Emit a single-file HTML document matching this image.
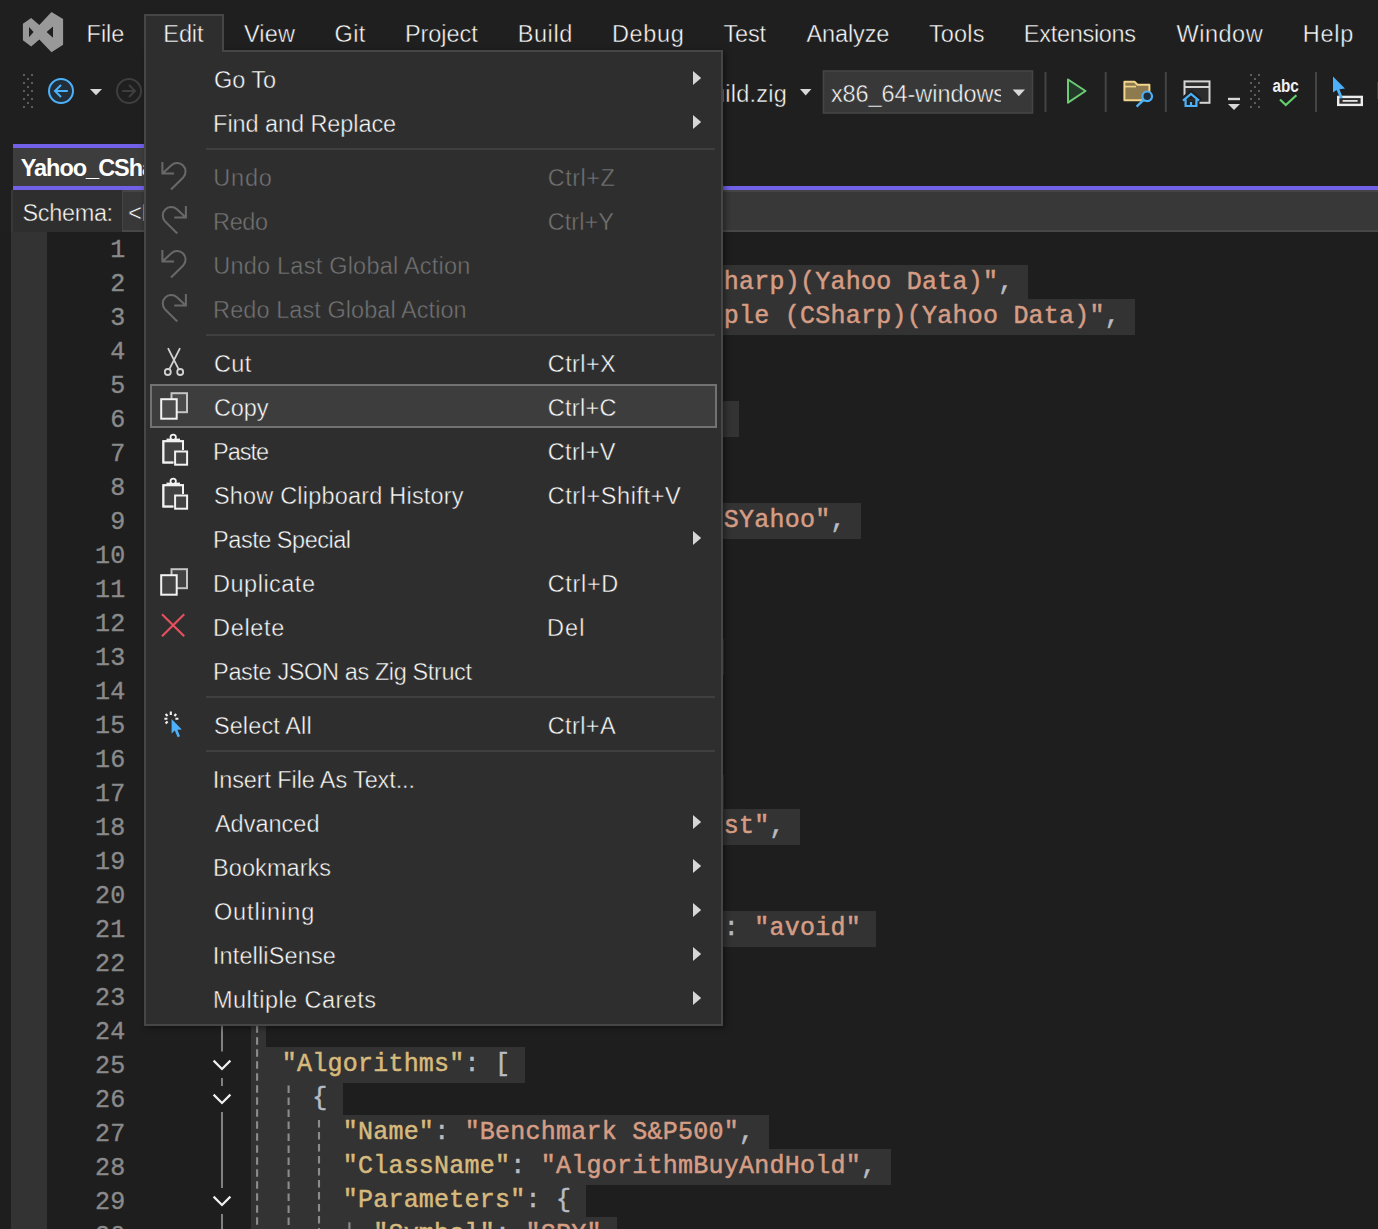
<!DOCTYPE html>
<html><head><meta charset="utf-8"><title>Yahoo_CSharp.json - Microsoft Visual Studio</title>
<style>
html,body{margin:0;padding:0;background:#1f1f1f;overflow:hidden;}
#app{position:relative;width:1378px;height:1229px;overflow:hidden;background:#1f1f1f;font-family:"Liberation Sans",sans-serif;}
.t{position:absolute;white-space:pre;line-height:30px;height:30px;font-family:"Liberation Sans",sans-serif;}
.abs{position:absolute;}
svg{position:absolute;left:0;top:0;overflow:visible;}
#editor{position:absolute;left:0;top:232px;width:1378px;height:997px;background:#1e1e1e;overflow:hidden;}
.cl{position:absolute;left:251.2px;white-space:pre;font-family:"Liberation Mono",monospace;font-size:25px;letter-spacing:0.2406px;line-height:34px;height:34px;margin-top:-232px;-webkit-text-stroke:0.5px currentColor;}
.sel{position:absolute;left:251px;height:35.5px;background:#333333;margin-top:-232px;}
.ln{position:absolute;left:47px;width:78.4px;text-align:right;white-space:pre;font-family:"Liberation Mono",monospace;font-size:25px;letter-spacing:0.2406px;line-height:34px;height:34px;color:#8a8a8a;margin-top:-232px;-webkit-text-stroke:0.35px currentColor;}
.k{color:#d7ba7d;} .s{color:#d69d85;} .p{color:#b8bcc4;}
#menu{position:absolute;left:144px;top:50px;width:575px;height:972px;background:#2e2e2e;border:2px solid #464646;box-shadow:2px 2px 6px rgba(0,0,0,0.42);z-index:20;}
#edithdr{position:absolute;left:144px;top:14px;width:76px;height:36px;background:#2e2e2e;border:2px solid #464646;border-bottom:none;z-index:21;}
.sep{position:absolute;left:60px;width:509px;height:2px;background:#3f3f3f;}
</style></head><body>
<div id="app">

<!-- title/menu bar + toolbar icons -->
<svg width="1378" height="130" viewBox="0 0 1378 130">
 <path fill="#999999" fill-rule="evenodd" d="M22.9 23.8 L31.2 18 L39.3 25 L51.5 11.9 L63.1 18.9 L63.1 44.7 L51.5 52.2 L39.3 39.5 L31.2 46.4 L22.9 40.3 Z M29 27 L29 37.2 L33.6 31.9 Z M53 26.4 L53 37.7 L46.6 31.9 Z"/>
 <g fill="#5c5c5c"><rect x="23" y="74" width="2" height="2"/><rect x="31" y="74" width="2" height="2"/><rect x="27" y="78" width="2" height="2"/><rect x="23" y="82" width="2" height="2"/><rect x="31" y="82" width="2" height="2"/><rect x="27" y="86" width="2" height="2"/><rect x="23" y="90" width="2" height="2"/><rect x="31" y="90" width="2" height="2"/><rect x="27" y="94" width="2" height="2"/><rect x="23" y="98" width="2" height="2"/><rect x="31" y="98" width="2" height="2"/><rect x="27" y="102" width="2" height="2"/><rect x="23" y="106" width="2" height="2"/><rect x="31" y="106" width="2" height="2"/></g>
 <circle cx="61" cy="91" r="12" fill="#222e38" stroke="#4db1fa" stroke-width="2"/>
 <path d="M67.8 91 H55 M61 85 L55 91 L61 97" fill="none" stroke="#4db1fa" stroke-width="2"/>
 <path d="M90 89 H102 L96 95.2 Z" fill="#d8d8d8"/>
 <circle cx="129" cy="91" r="12" fill="none" stroke="#3e3e3e" stroke-width="2"/>
 <path d="M122.2 91 H135 M129 85 L135 91 L129 97" fill="none" stroke="#3e3e3e" stroke-width="2"/>
 <!-- build.zig dropdown arrow -->
 <path d="M800 89 H811.4 L805.7 95.4 Z" fill="#d8d8d8"/>
 <!-- platform combo -->
 <rect x="823.5" y="71" width="209" height="42" fill="#383838" stroke="#454545" stroke-width="1.6"/>
 <path d="M1012.6 89.6 H1025 L1018.8 96.2 Z" fill="#d8d8d8"/>
 <!-- separators -->
 <g fill="#444444"><rect x="1044.5" y="72" width="2" height="40"/><rect x="1104.7" y="72" width="2" height="40"/><rect x="1164.8" y="72" width="2" height="40"/><rect x="1315" y="72" width="2" height="40"/></g>
 <!-- start (play) -->
 <path d="M1068 79.5 L1085.5 91 L1068 102.6 Z" fill="#24382a" stroke="#6ccb74" stroke-width="2" stroke-linejoin="round"/>
 <!-- folder + magnifier -->
 <path d="M1124.4 81.8 H1134.5 L1137.5 84.8 H1149.4 V100.2 H1124.4 Z" fill="#8d7a4f" stroke="#f2d48a" stroke-width="2" stroke-linejoin="round"/>
 <path d="M1124.4 86.6 H1136" fill="none" stroke="#f2d48a" stroke-width="1.6"/>
 <circle cx="1147.2" cy="96.3" r="4.8" fill="#1f2c38" stroke="#4db1fa" stroke-width="2.2"/>
 <path d="M1143.6 99.8 L1136.6 106.6" stroke="#4db1fa" stroke-width="2.4" fill="none"/>
 <!-- window + home -->
 <rect x="1184.5" y="81.4" width="25" height="21.4" fill="#2c2c2c" stroke="#d4d4d4" stroke-width="2"/>
 <rect x="1184.5" y="86" width="25" height="2" fill="#d4d4d4"/>
 <path d="M1181.5 100.5 L1191 93 L1200.5 100.5 M1185 99 V106.5 H1197 V99" fill="#1f1f1f" stroke="#1f1f1f" stroke-width="5"/>
 <path d="M1183 100.6 L1191 94 L1199 100.6 M1185.6 99.5 V106 H1196.4 V99.5 M1191 106 V102" fill="none" stroke="#4db1fa" stroke-width="2.2"/>
 <!-- overflow -->
 <rect x="1228" y="97.8" width="12" height="2.4" fill="#d8d8d8"/>
 <path d="M1228 104 H1240 L1234 110 Z" fill="#d8d8d8"/>
 <g fill="#5c5c5c"><rect x="1250" y="74" width="2" height="2"/><rect x="1258" y="74" width="2" height="2"/><rect x="1254" y="78" width="2" height="2"/><rect x="1250" y="82" width="2" height="2"/><rect x="1258" y="82" width="2" height="2"/><rect x="1254" y="86" width="2" height="2"/><rect x="1250" y="90" width="2" height="2"/><rect x="1258" y="90" width="2" height="2"/><rect x="1254" y="94" width="2" height="2"/><rect x="1250" y="98" width="2" height="2"/><rect x="1258" y="98" width="2" height="2"/><rect x="1254" y="102" width="2" height="2"/><rect x="1250" y="106" width="2" height="2"/><rect x="1258" y="106" width="2" height="2"/></g>
 <!-- abc check -->
 <text x="1272.4" y="92" font-family="Liberation Sans, sans-serif" font-weight="700" font-size="17.5" fill="#f0f0f0" textLength="26.4" lengthAdjust="spacingAndGlyphs">abc</text>
 <path d="M1280 99.5 L1285.8 105 L1296.4 95.2" fill="none" stroke="#62d06c" stroke-width="2.2"/>
 <!-- cursor + box -->
 <rect x="1338.2" y="96.9" width="23.6" height="8" fill="#2d2d2d" stroke="#ececec" stroke-width="2.4"/>
 <rect x="1342.6" y="100" width="15" height="1.8" fill="#e4e4e4"/>
 <path d="M1333 76.5 L1333 92.6 L1336.6 90 L1340.2 98.6 L1342.8 97.4 L1339.4 89.2 L1345 88.4 Z" fill="#4db1fa"/>
 <rect x="1377" y="82" width="1" height="17" fill="#3a3a3a"/>
</svg>

<!-- document tab -->
<div class="abs" style="left:13px;top:144px;width:300px;height:46px;background:#3d3d3d;"></div>
<div class="abs" style="left:13px;top:144px;width:300px;height:4px;background:#7160e8;"></div>
<div class="abs" style="left:13px;top:186px;width:1365px;height:4px;background:#7160e8;"></div>

<!-- schema bar -->
<div class="abs" style="left:11px;top:190px;width:1367px;height:42px;background:#2e2e2e;border-left:2px solid #383838;box-sizing:border-box;"></div>
<div class="abs" style="left:122px;top:190px;width:1256px;height:38px;background:#383838;border-top:2px solid #454545;border-bottom:2px solid #484848;border-left:1.5px solid #454545;"></div>

<!-- editor -->
<div id="editor">
 <div class="abs" style="left:11px;top:0;width:36px;height:997px;background:#333333;"></div>
 <div class="sel" style="top:265px;width:777.4px"></div><div class="sel" style="top:299px;width:884.1px"></div><div class="sel" style="top:333px;width:304.9px"></div><div class="sel" style="top:367px;width:91.5px"></div><div class="sel" style="top:401px;width:487.8px"></div><div class="sel" style="top:435px;width:350.6px"></div><div class="sel" style="top:469px;width:320.1px"></div><div class="sel" style="top:503px;width:609.7px"></div><div class="sel" style="top:537px;width:335.3px"></div><div class="sel" style="top:571px;width:381.1px"></div><div class="sel" style="top:605px;width:121.9px"></div><div class="sel" style="top:639px;width:472.5px"></div><div class="sel" style="top:673px;width:91.5px"></div><div class="sel" style="top:707px;width:76.2px"></div><div class="sel" style="top:741px;width:243.9px"></div><div class="sel" style="top:775px;width:472.5px"></div><div class="sel" style="top:809px;width:548.7px"></div><div class="sel" style="top:843px;width:350.6px"></div><div class="sel" style="top:877px;width:350.6px"></div><div class="sel" style="top:911px;width:625.0px"></div><div class="sel" style="top:945px;width:76.2px"></div><div class="sel" style="top:979px;width:304.9px"></div><div class="sel" style="top:1013px;width:15.2px"></div><div class="sel" style="top:1047px;width:274.4px"></div><div class="sel" style="top:1081px;width:91.5px"></div><div class="sel" style="top:1115px;width:518.3px"></div><div class="sel" style="top:1149px;width:640.2px"></div><div class="sel" style="top:1183px;width:335.3px"></div><div class="sel" style="top:1217px;width:365.8px"></div>
 <div class="ln" style="top:234px">1</div><div class="ln" style="top:268px">2</div><div class="ln" style="top:302px">3</div><div class="ln" style="top:336px">4</div><div class="ln" style="top:370px">5</div><div class="ln" style="top:404px">6</div><div class="ln" style="top:438px">7</div><div class="ln" style="top:472px">8</div><div class="ln" style="top:506px">9</div><div class="ln" style="top:540px">10</div><div class="ln" style="top:574px">11</div><div class="ln" style="top:608px">12</div><div class="ln" style="top:642px">13</div><div class="ln" style="top:676px">14</div><div class="ln" style="top:710px">15</div><div class="ln" style="top:744px">16</div><div class="ln" style="top:778px">17</div><div class="ln" style="top:812px">18</div><div class="ln" style="top:846px">19</div><div class="ln" style="top:880px">20</div><div class="ln" style="top:914px">21</div><div class="ln" style="top:948px">22</div><div class="ln" style="top:982px">23</div><div class="ln" style="top:1016px">24</div><div class="ln" style="top:1050px">25</div><div class="ln" style="top:1084px">26</div><div class="ln" style="top:1118px">27</div><div class="ln" style="top:1152px">28</div><div class="ln" style="top:1186px">29</div><div class="ln" style="top:1220px">30</div>
 <svg width="1378" height="997" viewBox="0 232 1378 997">
  <g stroke="#8c8c8c" stroke-width="2.1" stroke-dasharray="7.6 4.4" fill="none">
   <path d="M257.1 269.2 V1229"/>
   <path d="M288.6 1085.4 V1229"/>
   <path d="M319 1120 V1229"/>
   <path d="M349.4 1222.3 V1229"/>
  </g>
  <g stroke="#8c8c8c" stroke-width="1.8" fill="none">
   <path d="M222 1020 V1051.5 M222 1112 V1188 M222 1214 V1229"/>
   <path d="M222 1078 V1086" />
  </g>
  <g stroke="#f0f0f0" stroke-width="2.2" fill="none">
   <path d="M213.6 1060.6 L222 1069 L230.4 1060.6"/>
   <path d="M213.6 1094.6 L222 1103 L230.4 1094.6"/>
   <path d="M213.6 1196.6 L222 1205 L230.4 1196.6"/>
  </g>
 </svg>
 <div class="cl" style="top:232px"><span class="p">{</span></div><div class="cl" style="top:266px"><span class="p">  </span><span class="k">&quot;Name&quot;</span><span class="p">:</span><span class="p"> </span><span class="s">&quot;Portfolio Sample (CSharp)(Yahoo Data)&quot;</span><span class="p">,</span></div><div class="cl" style="top:300px"><span class="p">  </span><span class="k">&quot;Description&quot;</span><span class="p">:</span><span class="p"> </span><span class="s">&quot;A simple Example (CSharp)(Yahoo Data)&quot;</span><span class="p">,</span></div><div class="cl" style="top:334px"><span class="p">  </span><span class="k">&quot;DataSources&quot;</span><span class="p">:</span><span class="p"> </span><span class="p"> </span><span class="p">[</span></div><div class="cl" style="top:368px"><span class="p">    {</span></div><div class="cl" style="top:402px"><span class="p">      </span><span class="k">&quot;Name&quot;</span><span class="p">:</span><span class="p"> </span><span class="s">&quot;Yahoo! Finance&quot;</span><span class="p">,</span></div><div class="cl" style="top:436px"><span class="p">      </span><span class="k">&quot;Enabled&quot;</span><span class="p">:</span><span class="p"> </span><span class="p">true</span><span class="p">,</span></div><div class="cl" style="top:470px"><span class="p">      </span><span class="k">&quot;Priority&quot;</span><span class="p">:</span><span class="p"> </span><span class="p">1</span><span class="p">,</span></div><div class="cl" style="top:504px"><span class="p">      </span><span class="k">&quot;ClassName&quot;</span><span class="p">:</span><span class="p"> </span><span class="s">&quot;DataSourceCSYahoo&quot;</span><span class="p">,</span></div><div class="cl" style="top:538px"><span class="p">      </span><span class="k">&quot;Parameters&quot;</span><span class="p">:</span><span class="p"> </span><span class="p">{</span></div><div class="cl" style="top:572px"><span class="p">        </span><span class="k">&quot;Interval&quot;</span><span class="p">:</span><span class="p"> </span><span class="s">&quot;1d&quot;</span></div><div class="cl" style="top:606px"><span class="p">      }</span></div><div class="cl" style="top:640px"><span class="p">      </span><span class="k">&quot;CacheFolder&quot;</span><span class="p">:</span><span class="p"> </span><span class="s">&quot;cache/&quot;</span><span class="p">,</span></div><div class="cl" style="top:674px"><span class="p">    }</span></div><div class="cl" style="top:708px"><span class="p">  ],</span></div><div class="cl" style="top:742px"><span class="p">  </span><span class="k">&quot;Settings&quot;</span><span class="p">:</span><span class="p"> </span><span class="p">{</span></div><div class="cl" style="top:776px"><span class="p">    </span><span class="k">&quot;StartDate&quot;</span><span class="p">:</span><span class="p"> </span><span class="s">&quot;2010-01-01&quot;</span><span class="p">,</span></div><div class="cl" style="top:810px"><span class="p">    </span><span class="k">&quot;BrokerSimulation&quot;</span><span class="p">:</span><span class="p"> </span><span class="s">&quot;Backtest&quot;</span><span class="p">,</span></div><div class="cl" style="top:844px"><span class="p">    </span><span class="k">&quot;Capital&quot;</span><span class="p">:</span><span class="p"> </span><span class="p">100000</span><span class="p">,</span></div><div class="cl" style="top:878px"><span class="p">    </span><span class="k">&quot;Currency&quot;</span><span class="p">:</span><span class="p"> </span><span class="s">&quot;USD&quot;</span><span class="p">,</span></div><div class="cl" style="top:912px"><span class="p">    </span><span class="k">&quot;MissingDataHandlingPolicy&quot;</span><span class="p">:</span><span class="p"> </span><span class="s">&quot;avoid&quot;</span></div><div class="cl" style="top:946px"><span class="p">  },</span></div><div class="cl" style="top:980px"><span class="p">  </span><span class="k">&quot;Verbose&quot;</span><span class="p">:</span><span class="p"> </span><span class="p">false</span><span class="p">,</span></div><div class="cl" style="top:1014px"></div><div class="cl" style="top:1048px"><span class="p">  </span><span class="k">&quot;Algorithms&quot;</span><span class="p">:</span><span class="p"> </span><span class="p">[</span></div><div class="cl" style="top:1082px"><span class="p">    </span><span class="p">{</span></div><div class="cl" style="top:1116px"><span class="p">      </span><span class="k">&quot;Name&quot;</span><span class="p">:</span><span class="p"> </span><span class="s">&quot;Benchmark S&amp;P500&quot;</span><span class="p">,</span></div><div class="cl" style="top:1150px"><span class="p">      </span><span class="k">&quot;ClassName&quot;</span><span class="p">:</span><span class="p"> </span><span class="s">&quot;AlgorithmBuyAndHold&quot;</span><span class="p">,</span></div><div class="cl" style="top:1184px"><span class="p">      </span><span class="k">&quot;Parameters&quot;</span><span class="p">:</span><span class="p"> </span><span class="p">{</span></div><div class="cl" style="top:1218px"><span class="p">        </span><span class="k">&quot;Symbol&quot;</span><span class="p">:</span><span class="p"> </span><span class="s">&quot;SPY&quot;</span></div>
</div>

<!-- Edit menu popup -->
<div id="menu">
 <div class="sep" style="top:96px"></div>
 <div class="sep" style="top:282px"></div>
 <div class="sep" style="top:644px"></div>
 <div class="sep" style="top:698px"></div>
 <div class="abs" style="left:4px;top:332px;width:563px;height:40px;background:#3d3d3d;border:2px solid #727272;"></div>
</div>
<div id="edithdr"></div>
<svg width="1378" height="1229" viewBox="0 0 1378 1229" style="z-index:25">
 <g fill="#d6d6d6"><path d="M693 71 L701.2 78 L693 85 Z"/><path d="M693 115 L701.2 122 L693 129 Z"/><path d="M693 531 L701.2 538 L693 545 Z"/><path d="M693 815 L701.2 822 L693 829 Z"/><path d="M693 859 L701.2 866 L693 873 Z"/><path d="M693 903 L701.2 910 L693 917 Z"/><path d="M693 947 L701.2 954 L693 961 Z"/><path d="M693 991 L701.2 998 L693 1005 Z"/></g>
 <g fill="none" stroke="#696969" stroke-width="2">
  <path d="M162.4 162 V173.5 H174 M163 173 L171.4 165.2 A8.5 8.5 0 0 1 183.4 177.2 L171 189.5"/><path d="M185.9 206 V217.5 H174.3 M185.3 217 L176.9 209.2 A8.5 8.5 0 0 0 164.9 221.2 L177.3 233.5"/><path d="M162.4 250 V261.5 H174 M163 261 L171.4 253.2 A8.5 8.5 0 0 1 183.4 265.2 L171 277.5"/><path d="M185.9 294 V305.5 H174.3 M185.3 305 L176.9 297.2 A8.5 8.5 0 0 0 164.9 309.2 L177.3 321.5"/>
 </g>
 <!-- cut -->
 <g fill="none" stroke="#d2d2d2" stroke-width="1.8">
  <path d="M168 348.2 L178.6 369.2 M180 348.2 L169.4 369.2"/>
  <circle cx="167.8" cy="372" r="3"/><circle cx="180.2" cy="372" r="3"/>
 </g>
 <rect x="171.5" y="393.2" width="15.5" height="19" fill="#4b4b4b" stroke="#c4c4c4" stroke-width="2"/><rect x="161.2" y="399.2" width="15.5" height="19.5" fill="#4b4b4b" stroke="#f2f2f2" stroke-width="2"/>
 <path d="M173.4 462.4 H163.4 V441.2 H183 V450" fill="#424242" stroke="#f2f2f2" stroke-width="2"/><rect x="164.4" y="442.2" width="17.6" height="19.2" fill="#424242"/><path d="M173.4 462.4 H163.4 V441.2 H183 V450" fill="none" stroke="#f2f2f2" stroke-width="2"/><rect x="166.5" y="438.6" width="13.5" height="3" fill="#f2f2f2"/><circle cx="173.2" cy="437.3" r="2.7" fill="#2e2e2e" stroke="#f2f2f2" stroke-width="1.8"/><rect x="175.1" y="451.5" width="12" height="13.2" fill="#424242" stroke="#f2f2f2" stroke-width="2"/>
 <path d="M173.4 506.4 H163.4 V485.2 H183 V494" fill="#424242" stroke="#f2f2f2" stroke-width="2"/><rect x="164.4" y="486.2" width="17.6" height="19.2" fill="#424242"/><path d="M173.4 506.4 H163.4 V485.2 H183 V494" fill="none" stroke="#f2f2f2" stroke-width="2"/><rect x="166.5" y="482.6" width="13.5" height="3" fill="#f2f2f2"/><circle cx="173.2" cy="481.3" r="2.7" fill="#2e2e2e" stroke="#f2f2f2" stroke-width="1.8"/><rect x="175.1" y="495.5" width="12" height="13.2" fill="#424242" stroke="#f2f2f2" stroke-width="2"/>
 <rect x="171.5" y="569.2" width="15.5" height="19" fill="#424242" stroke="#c4c4c4" stroke-width="2"/><rect x="161.2" y="575.2" width="15.5" height="19.5" fill="#424242" stroke="#f2f2f2" stroke-width="2"/>
 <path d="M162 614.2 L184.2 636.2 M184.2 614.2 L162 636.2" stroke="#e5505f" stroke-width="2.2" fill="none"/>
 <!-- select all -->
 <g stroke="#f4f4f4" stroke-width="2.1" fill="none">
  <path d="M170.8 711.6 V715 M164.4 718.7 H167.4 M175.4 718.7 H178.4 M165.6 714 L167.6 716 M176.2 714 L174.4 716 M165.6 723.6 L167.6 721.6"/>
 </g>
 <path d="M171.6 719 L171.6 733.4 L174.8 730.6 L177.6 737.2 L180 736.2 L177.4 729.8 L181.8 729.6 Z" fill="#4db1fa"/>
</svg>

<span class="t" style="left:86.60px;top:19.26px;font-size:23.5px;letter-spacing:-0.045px;color:#fafafa;-webkit-text-stroke:0.45px #1f1f1f;">File</span>
<span class="t" style="left:163.35px;top:19.26px;font-size:23.5px;letter-spacing:-0.112px;color:#fafafa;-webkit-text-stroke:0.45px #2e2e2e;z-index:30;">Edit</span>
<span class="t" style="left:243.89px;top:19.26px;font-size:23.5px;letter-spacing:0.181px;color:#fafafa;-webkit-text-stroke:0.45px #1f1f1f;">View</span>
<span class="t" style="left:334.61px;top:19.26px;font-size:23.5px;letter-spacing:0.317px;color:#fafafa;-webkit-text-stroke:0.45px #1f1f1f;">Git</span>
<span class="t" style="left:404.92px;top:19.26px;font-size:23.5px;letter-spacing:-0.046px;color:#fafafa;-webkit-text-stroke:0.45px #1f1f1f;">Project</span>
<span class="t" style="left:517.74px;top:19.26px;font-size:23.5px;letter-spacing:0.563px;color:#fafafa;-webkit-text-stroke:0.45px #1f1f1f;">Build</span>
<span class="t" style="left:611.92px;top:19.26px;font-size:23.5px;letter-spacing:0.642px;color:#fafafa;-webkit-text-stroke:0.45px #1f1f1f;">Debug</span>
<span class="t" style="left:723.59px;top:19.26px;font-size:23.5px;letter-spacing:-0.215px;color:#fafafa;-webkit-text-stroke:0.45px #1f1f1f;">Test</span>
<span class="t" style="left:806.47px;top:19.26px;font-size:23.5px;letter-spacing:-0.123px;color:#fafafa;-webkit-text-stroke:0.45px #1f1f1f;">Analyze</span>
<span class="t" style="left:928.92px;top:19.26px;font-size:23.5px;letter-spacing:0.176px;color:#fafafa;-webkit-text-stroke:0.45px #1f1f1f;">Tools</span>
<span class="t" style="left:1023.84px;top:19.26px;font-size:23.5px;letter-spacing:-0.299px;color:#fafafa;-webkit-text-stroke:0.45px #1f1f1f;">Extensions</span>
<span class="t" style="left:1176.57px;top:19.26px;font-size:23.5px;letter-spacing:0.505px;color:#fafafa;-webkit-text-stroke:0.45px #1f1f1f;">Window</span>
<span class="t" style="left:1302.74px;top:19.26px;font-size:23.5px;letter-spacing:0.729px;color:#fafafa;-webkit-text-stroke:0.45px #1f1f1f;">Help</span>
<span class="t" style="left:213.93px;top:64.56px;font-size:23.5px;letter-spacing:-0.045px;color:#fafafa;-webkit-text-stroke:0.45px #2e2e2e;z-index:30;">Go To</span>
<span class="t" style="left:213.11px;top:108.56px;font-size:23.5px;letter-spacing:-0.077px;color:#fafafa;-webkit-text-stroke:0.45px #2e2e2e;z-index:30;">Find and Replace</span>
<span class="t" style="left:213.26px;top:162.56px;font-size:23.5px;letter-spacing:0.827px;color:#737373;-webkit-text-stroke:0.45px #2e2e2e;z-index:30;">Undo</span>
<span class="t" style="left:547.74px;top:162.56px;font-size:23.5px;letter-spacing:0.485px;color:#737373;-webkit-text-stroke:0.45px #2e2e2e;z-index:30;">Ctrl+Z</span>
<span class="t" style="left:213.11px;top:206.56px;font-size:23.5px;letter-spacing:-0.390px;color:#737373;-webkit-text-stroke:0.45px #2e2e2e;z-index:30;">Redo</span>
<span class="t" style="left:547.74px;top:206.56px;font-size:23.5px;letter-spacing:0.055px;color:#737373;-webkit-text-stroke:0.45px #2e2e2e;z-index:30;">Ctrl+Y</span>
<span class="t" style="left:213.26px;top:250.56px;font-size:23.5px;letter-spacing:0.224px;color:#737373;-webkit-text-stroke:0.45px #2e2e2e;z-index:30;">Undo Last Global Action</span>
<span class="t" style="left:213.11px;top:294.56px;font-size:23.5px;letter-spacing:0.066px;color:#737373;-webkit-text-stroke:0.45px #2e2e2e;z-index:30;">Redo Last Global Action</span>
<span class="t" style="left:213.93px;top:348.56px;font-size:23.5px;letter-spacing:0.388px;color:#fafafa;-webkit-text-stroke:0.45px #2e2e2e;z-index:30;">Cut</span>
<span class="t" style="left:547.74px;top:348.56px;font-size:23.5px;letter-spacing:0.422px;color:#fafafa;-webkit-text-stroke:0.45px #2e2e2e;z-index:30;">Ctrl+X</span>
<span class="t" style="left:213.93px;top:392.56px;font-size:23.5px;letter-spacing:-0.126px;color:#fafafa;-webkit-text-stroke:0.45px #3d3d3d;z-index:30;">Copy</span>
<span class="t" style="left:547.74px;top:392.56px;font-size:23.5px;letter-spacing:0.286px;color:#fafafa;-webkit-text-stroke:0.45px #3d3d3d;z-index:30;">Ctrl+C</span>
<span class="t" style="left:213.11px;top:436.56px;font-size:23.5px;letter-spacing:-1.062px;color:#fafafa;-webkit-text-stroke:0.45px #2e2e2e;z-index:30;">Paste</span>
<span class="t" style="left:547.74px;top:436.56px;font-size:23.5px;letter-spacing:0.341px;color:#fafafa;-webkit-text-stroke:0.45px #2e2e2e;z-index:30;">Ctrl+V</span>
<span class="t" style="left:213.88px;top:480.56px;font-size:23.5px;letter-spacing:0.199px;color:#fafafa;-webkit-text-stroke:0.45px #2e2e2e;z-index:30;">Show Clipboard History</span>
<span class="t" style="left:547.74px;top:480.56px;font-size:23.5px;letter-spacing:0.566px;color:#fafafa;-webkit-text-stroke:0.45px #2e2e2e;z-index:30;">Ctrl+Shift+V</span>
<span class="t" style="left:213.11px;top:524.56px;font-size:23.5px;letter-spacing:-0.476px;color:#fafafa;-webkit-text-stroke:0.45px #2e2e2e;z-index:30;">Paste Special</span>
<span class="t" style="left:213.11px;top:568.56px;font-size:23.5px;letter-spacing:0.484px;color:#fafafa;-webkit-text-stroke:0.45px #2e2e2e;z-index:30;">Duplicate</span>
<span class="t" style="left:547.74px;top:568.56px;font-size:23.5px;letter-spacing:0.669px;color:#fafafa;-webkit-text-stroke:0.45px #2e2e2e;z-index:30;">Ctrl+D</span>
<span class="t" style="left:213.11px;top:612.56px;font-size:23.5px;letter-spacing:0.659px;color:#fafafa;-webkit-text-stroke:0.45px #2e2e2e;z-index:30;">Delete</span>
<span class="t" style="left:546.97px;top:612.56px;font-size:23.5px;letter-spacing:1.065px;color:#fafafa;-webkit-text-stroke:0.45px #2e2e2e;z-index:30;">Del</span>
<span class="t" style="left:213.11px;top:656.56px;font-size:23.5px;letter-spacing:-0.385px;color:#fafafa;-webkit-text-stroke:0.45px #2e2e2e;z-index:30;">Paste JSON as Zig Struct</span>
<span class="t" style="left:213.88px;top:710.56px;font-size:23.5px;letter-spacing:0.125px;color:#fafafa;-webkit-text-stroke:0.45px #2e2e2e;z-index:30;">Select All</span>
<span class="t" style="left:547.74px;top:710.56px;font-size:23.5px;letter-spacing:0.392px;color:#fafafa;-webkit-text-stroke:0.45px #2e2e2e;z-index:30;">Ctrl+A</span>
<span class="t" style="left:212.87px;top:764.56px;font-size:23.5px;letter-spacing:-0.119px;color:#fafafa;-webkit-text-stroke:0.45px #2e2e2e;z-index:30;">Insert File As Text...</span>
<span class="t" style="left:214.92px;top:808.56px;font-size:23.5px;letter-spacing:0.004px;color:#fafafa;-webkit-text-stroke:0.45px #2e2e2e;z-index:30;">Advanced</span>
<span class="t" style="left:213.11px;top:852.56px;font-size:23.5px;letter-spacing:0.056px;color:#fafafa;-webkit-text-stroke:0.45px #2e2e2e;z-index:30;">Bookmarks</span>
<span class="t" style="left:213.88px;top:896.56px;font-size:23.5px;letter-spacing:0.949px;color:#fafafa;-webkit-text-stroke:0.45px #2e2e2e;z-index:30;">Outlining</span>
<span class="t" style="left:212.87px;top:940.56px;font-size:23.5px;letter-spacing:0.135px;color:#fafafa;-webkit-text-stroke:0.45px #2e2e2e;z-index:30;">IntelliSense</span>
<span class="t" style="left:213.11px;top:984.56px;font-size:23.5px;letter-spacing:0.433px;color:#fafafa;-webkit-text-stroke:0.45px #2e2e2e;z-index:30;">Multiple Carets</span>
<span class="t" style="left:698.68px;top:78.86px;font-size:23.5px;letter-spacing:0.252px;color:#fafafa;-webkit-text-stroke:0.45px #1f1f1f;">build.zig</span>
<span class="t" style="left:830.89px;top:78.86px;font-size:23.5px;letter-spacing:-0.062px;color:#fafafa;-webkit-text-stroke:0.45px #383838;width:170.3px;overflow:hidden;">x86_64-windows</span>
<span class="t" style="left:20.65px;top:152.66px;font-size:23.5px;letter-spacing:-1.013px;color:#ffffff;font-weight:700;">Yahoo_CSharp.json</span>
<span class="t" style="left:22.52px;top:197.86px;font-size:23.5px;letter-spacing:-0.350px;color:#fafafa;-webkit-text-stroke:0.45px #2e2e2e;">Schema:</span>
<span class="t" style="left:128.31px;top:197.86px;font-size:23.5px;letter-spacing:-0.400px;color:#fafafa;-webkit-text-stroke:0.45px #383838;">&lt;No Schema Selected&gt;</span>
</div>
</body></html>
